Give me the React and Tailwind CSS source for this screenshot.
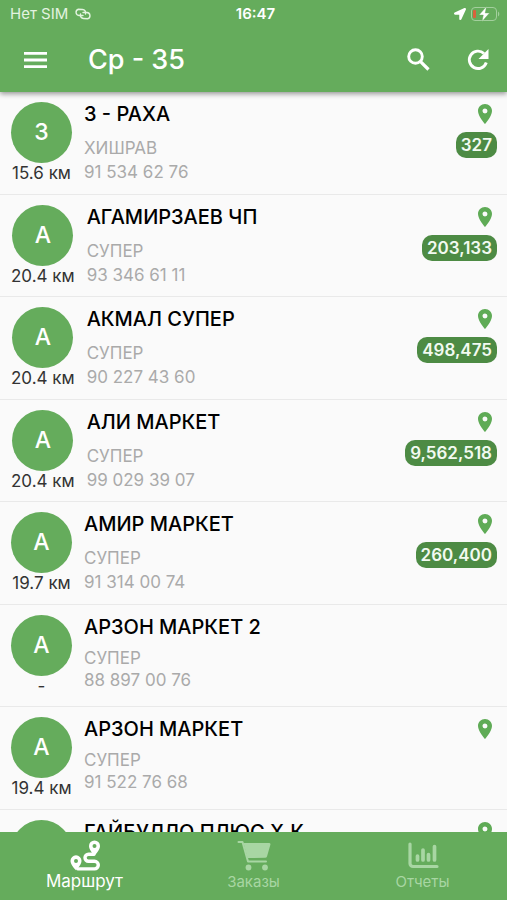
import React from "react";
import { MdLocationOn } from "react-icons/md";
import { FaLocationArrow } from "react-icons/fa";

const stops = [
  { name: "3 - РАХА", type: "ХИШРАВ", phone: "91 534 62 76", distance: "15.6 км", amount: "327", pin: true },
  { name: "АГАМИРЗАЕВ ЧП", type: "СУПЕР", phone: "93 346 61 11", distance: "20.4 км", amount: "203,133", pin: true },
  { name: "АКМАЛ СУПЕР", type: "СУПЕР", phone: "90 227 43 60", distance: "20.4 км", amount: "498,475", pin: true },
  { name: "АЛИ МАРКЕТ", type: "СУПЕР", phone: "99 029 39 07", distance: "20.4 км", amount: "9,562,518", pin: true },
  { name: "АМИР МАРКЕТ", type: "СУПЕР", phone: "91 314 00 74", distance: "19.7 км", amount: "260,400", pin: true },
  { name: "АРЗОН МАРКЕТ 2", type: "СУПЕР", phone: "88 897 00 76", distance: "-" },
  { name: "АРЗОН МАРКЕТ", type: "СУПЕР", phone: "91 522 76 68", distance: "19.4 км", pin: true },
  { name: "ГАЙБУЛЛО ПЛЮС Х.К", pin: true },
];

function LinkIcon() {
  return (
    <svg className="h-3 w-[18px]" viewBox="0 0 18 12" fill="none" stroke="currentColor" strokeWidth="1.4" strokeLinecap="round" aria-hidden="true">
      <path d="M9 7.500H5A3.200 3.200 0 0 1 4.500 1.200L8.500 1.500A3.400 3.400 0 0 1 11.500 6" />
      <path d="M9 4.500H13A3.200 3.200 0 0 1 13.500 10.800L9.500 10.500A3.400 3.400 0 0 1 6.500 6" />
    </svg>
  );
}

function BatteryIcon() {
  return (
    <svg className="h-4 w-[31px]" viewBox="0 0 31 16" fill="none" aria-hidden="true">
      <rect x="1.500" y="1.500" width="25" height="13" rx="3.500" stroke="#a3cf9d" />
      <rect x="3" y="4" width="3" height="8" rx="1" fill="#d9623c" />
      <path d="M28 5.500a3 3 0 0 1 0 5z" fill="#a3cf9d" />
      <path d="M16.500 .5 9 9h4.300L12 15.500 19.500 7h-4.300z" fill="white" stroke="#65ac5c" strokeWidth=".4" />
    </svg>
  );
}

function MenuIcon() {
  return (
    <svg className="size-[30px]" viewBox="0 0 30 30" fill="currentColor" aria-hidden="true">
      <path d="M4 7h23v2.800H4zM4 13.600h23v2.800H4zM4 20.200h23V23H4z" />
    </svg>
  );
}

function SearchIcon() {
  return (
    <svg className="size-[30px]" viewBox="0 0 30 30" fill="none" stroke="currentColor" strokeWidth="2.900" aria-hidden="true">
      <circle cx="12.500" cy="11.500" r="6.800" />
      <path d="M17.300 16.300 25.500 24.500" strokeWidth="3.200" />
    </svg>
  );
}

function RefreshIcon() {
  return (
    <svg className="size-[30px]" viewBox="0 0 30 30" fill="none" aria-hidden="true">
      <path d="M23.300 17.500A8.700 8.700 0 1 1 21 8.500" stroke="currentColor" strokeWidth="2.900" />
      <path d="M25.500 4v10h-10z" fill="currentColor" />
    </svg>
  );
}

function RouteIcon() {
  return (
    <svg className="h-8 w-8" viewBox="0 0 32 32" fill="none" aria-hidden="true">
      <path d="M25 14.300H19.500a3.500 3.500 0 0 0 0 7H25.500a3.800 3.800 0 0 1 0 7.600H9" stroke="white" strokeWidth="3.400" strokeLinecap="round" />
      <path fillRule="evenodd" d="M25.500 .5a5.500 5.500 0 0 1 5.500 5.500c0 3-3 7-5.500 9.500-2.500-2.500-5.500-6.500-5.500-9.500A5.500 5.500 0 0 1 25.500 .5zm0 3.600a2 2 0 1 0 0 4 2 2 0 0 0 0-4z" fill="white" />
      <path fillRule="evenodd" d="M7 15.300a5.500 5.500 0 0 1 5.500 5.500c0 3-3 7-5.500 9.500-2.500-2.500-5.500-6.500-5.500-9.500A5.500 5.500 0 0 1 7 15.300zm0 3.600a2 2 0 1 0 0 4 2 2 0 0 0 0-4z" fill="white" />
    </svg>
  );
}

function CartIcon() {
  return (
    <svg className="h-8 w-[34px]" viewBox="0 0 34 32" fill="none" aria-hidden="true">
      <path d="M1.500 2H5.500L11 21.500H29" stroke="currentColor" strokeWidth="2" strokeLinecap="round" strokeLinejoin="round" />
      <path d="M6.500 3H32a1.500 1.500 0 0 1 1.300 2L30 16.500a2 2 0 0 1-1.800 1.300L10.500 18z" fill="currentColor" />
      <circle cx="11.500" cy="27.500" r="2.900" fill="currentColor" />
      <circle cx="28" cy="27.500" r="2.900" fill="currentColor" />
    </svg>
  );
}

function ReportsIcon() {
  return (
    <svg className="h-8 w-8" viewBox="0 0 32 32" fill="none" stroke="currentColor" strokeLinecap="round" aria-hidden="true">
      <path d="M3 4V23.500a3 3 0 0 0 3 3H30" strokeWidth="3.200" />
      <path d="M10.500 16v4M16 10v10M21.500 14.500V20M27.500 6.500V20" strokeWidth="3.700" />
    </svg>
  );
}

function Stop({ stop }) {
  return (
    <li className="flex h-[103px] items-start border-b border-[#e9e9e9] pr-2.5 pl-[11px] even:h-[102px]">
      <div className="flex min-w-[61px] shrink-0 flex-col items-center pt-2.5">
        <div className="flex size-[61px] items-center justify-center rounded-full bg-[#65ac5c] text-[23px] font-medium text-white">
          {stop.name[0]}
        </div>
        {stop.distance && (
          <span className="text-[17px] leading-5 whitespace-nowrap text-[#333]">{stop.distance}</span>
        )}
      </div>
      <div className="min-w-0 flex-1 pt-2 pl-3">
        <h2 className="text-xl leading-7 font-medium whitespace-nowrap text-black">{stop.name}</h2>
        <div className={stop.amount ? "pt-2 text-[17px] leading-6 text-[#aaa]" : "pt-1.5 text-[17px] leading-[22px] text-[#aaa]"}>
          <p>{stop.type}</p>
          <p>{stop.phone}</p>
        </div>
      </div>
      <div className="flex flex-col items-end pt-2.5">
        {stop.pin && <MdLocationOn className="size-6 text-[#5fab56]" aria-label="На карте" />}
        {stop.amount && (
          <span className="mt-1.5 rounded-[10px] bg-[#4d8b44] px-[5px] text-[17px] leading-[26px] font-semibold text-[#f2faf1]">
            {stop.amount}
          </span>
        )}
      </div>
    </li>
  );
}

export default function App() {
  return (
    <div className="flex h-screen flex-col overflow-hidden bg-[#fafafa] font-['Inter','Noto_Sans',sans-serif]">
      <header className="z-10 shrink-0 bg-[#65ac5c] text-white shadow-[0_2px_5px_rgba(0,0,0,0.4)]">
        <div className="grid h-7 grid-cols-3 items-center pr-1.5 pl-2.5 text-[15px] leading-5">
          <div className="flex items-center gap-1.5 text-[#e3f3e0]">
            <span>Нет SIM</span>
            <LinkIcon />
          </div>
          <span className="text-center font-semibold">16:47</span>
          <div className="flex items-center justify-end gap-1">
            <FaLocationArrow className="size-3" aria-hidden="true" />
            <BatteryIcon />
          </div>
        </div>
        <div className="flex h-16 items-center pr-3.5 pl-5">
          <button type="button" aria-label="Меню">
            <MenuIcon />
          </button>
          <h1 className="flex-1 pl-[38px] text-[27px] leading-9 font-medium">Ср - 35</h1>
          <button type="button" aria-label="Поиск">
            <SearchIcon />
          </button>
          <button type="button" aria-label="Обновить" className="ml-[30px]">
            <RefreshIcon />
          </button>
        </div>
      </header>
      <main className="min-h-0 flex-1 overflow-hidden">
        <ul>
          {stops.map((stop) => (
            <Stop key={stop.name} stop={stop} />
          ))}
        </ul>
      </main>
      <nav className="grid h-[68px] shrink-0 grid-cols-3 bg-[#65ac5c]">
        <a href="#route" aria-current="page" className="flex flex-col items-center pt-2 text-[17px] leading-[18px] text-white">
          <RouteIcon />
          <span>Маршрут</span>
        </a>
        <a href="#orders" className="flex flex-col items-center pt-2 text-[15px] leading-5 text-[#a8d6a3]">
          <CartIcon />
          <span>Заказы</span>
        </a>
        <a href="#reports" className="flex flex-col items-center pt-2 text-[15px] leading-5 text-[#a8d6a3]">
          <ReportsIcon />
          <span>Отчеты</span>
        </a>
      </nav>
    </div>
  );
}
